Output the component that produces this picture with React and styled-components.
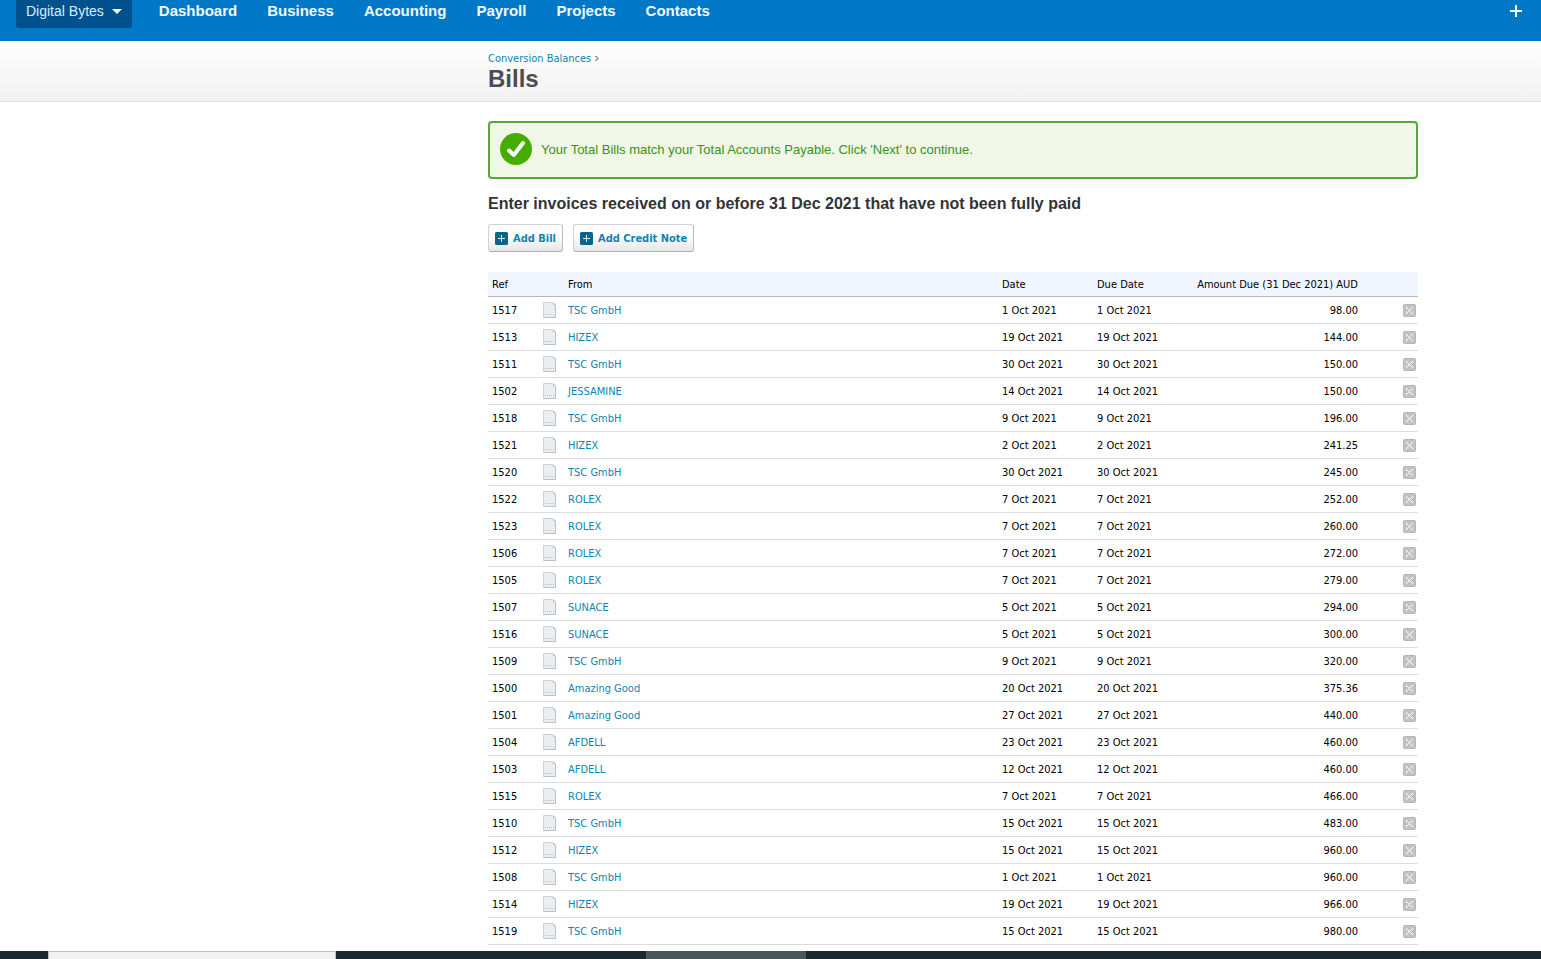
import React from 'react';
import styled, { createGlobalStyle } from 'styled-components';

const GlobalStyle = createGlobalStyle`
  * {
    box-sizing: border-box;
  }

  body {
    margin: 0;
    background-color: #fff;
    color: #000;
    font-family: "DejaVu Sans Condensed", Tahoma, "Noto Sans", sans-serif;
    font-size: 11px;
  }

  a {
    color: #0d84b2;
    text-decoration: none;
  }
`;

const Page = styled.div`
  display: flex;
  flex-direction: column;
  min-height: 100vh;
`;

const TopBar = styled.header`
  display: flex;
  align-items: flex-start;
  height: 41px;
  padding: 0 16px;
  background-color: #0078c8;
  font-family: "Liberation Sans", Arial, sans-serif;
`;

const OrgButton = styled.button`
  display: flex;
  align-items: center;
  gap: 8px;
  height: 28px;
  padding: 0 10px 6px;
  border: none;
  border-radius: 0 0 3px 3px;
  background-color: #00518e;
  color: #d9ecf8;
  font-family: inherit;
  font-size: 14px;
  cursor: pointer;
`;

const Nav = styled.nav`
  display: flex;
  gap: 30px;
  margin-left: 27px;
`;

const NavLink = styled.a`
  color: #f2faff;
  font-size: 15px;
  font-weight: bold;
  line-height: 22px;
`;

const PlusButton = styled.button`
  display: flex;
  margin: 4px 2px 0 auto;
  padding: 0;
  border: none;
  background: none;
  cursor: pointer;
`;

const TitleBar = styled.div`
  height: 61px;
  padding: 10px 123px 0 488px;
  border-bottom: 1px solid #dfdfdf;
  background: linear-gradient(#ffffff, #f1f1f1);
`;

const Breadcrumb = styled.div`
  display: flex;
  align-items: center;
  gap: 4px;
  line-height: 15px;
`;

const Title = styled.h1`
  margin: 0;
  color: #4c4c4c;
  font-family: "Liberation Sans", Arial, sans-serif;
  font-size: 24px;
  line-height: 26px;
`;

const Main = styled.main`
  flex: 1;
  padding: 19px 123px 6px 488px;
`;

const Notice = styled.div`
  display: flex;
  align-items: center;
  gap: 9px;
  height: 58px;
  padding: 0 10px 2px;
  border: 2px solid #55a832;
  border-radius: 4px;
  background-color: #f0f7e6;
  color: #3d8f1d;
  font-family: "Liberation Sans", Arial, sans-serif;
  font-size: 13px;
`;

const Heading = styled.h2`
  margin: 14px 0 10px;
  color: #333;
  font-family: "Liberation Sans", Arial, sans-serif;
  font-size: 16px;
  line-height: 21px;
`;

const ButtonRow = styled.div`
  display: flex;
  gap: 10px;
  margin-bottom: 20px;
`;

const Button = styled.button`
  display: flex;
  align-items: center;
  gap: 5px;
  height: 28px;
  padding: 0 6px;
  border: 1px solid #d2d2d2;
  border-right-color: #b9b9b9;
  border-bottom-color: #adadad;
  border-radius: 3px;
  background: linear-gradient(#ffffff 40%, #e6e6e6);
  color: #0d84b2;
  font-family: inherit;
  font-size: 11px;
  font-weight: bold;
  white-space: nowrap;
  cursor: pointer;
`;

const Table = styled.table`
  width: 100%;
  border-collapse: separate;
  border-spacing: 0;
  table-layout: fixed;
`;

const HeadCell = styled.th`
  width: ${({ $width }) => $width || 'auto'};
  height: 25px;
  padding: 0 4px;
  border-bottom: 1px solid #b4b9c4;
  background-color: #f1f5fe;
  font-weight: normal;
  text-align: ${({ $align }) => $align || 'left'};
  white-space: nowrap;
`;

const Cell = styled.td`
  height: 27px;
  padding: 0 4px;
  border-bottom: 1px solid #dcdcdc;
  text-align: ${({ $align }) => $align || 'left'};
`;

const DeleteCell = styled(Cell)`
  padding-right: 2px;
`;

const DeleteButton = styled.button`
  display: block;
  margin-left: auto;
  padding: 0;
  border: none;
  background: none;
  cursor: pointer;
`;

const Icon = styled.svg`
  display: block;
  flex-shrink: 0;
`;

const Taskbar = styled.footer`
  display: flex;
  height: 8px;
  background-color: #19292f;
`;

const TaskbarSearch = styled.div`
  width: 288px;
  margin-left: 48px;
  border: 1px solid #bdbdbd;
  border-bottom: none;
  background-color: #f1f1f1;
`;

const TaskbarItem = styled.div`
  width: 160px;
  margin-left: 310px;
  background-color: #4a5659;
`;

const AddIcon = () => (
  <Icon width="13" height="13" viewBox="0 0 13 13" aria-hidden="true">
    <rect width="13" height="13" rx="1.5" fill="#07658a" />
    <path d="M3 6.5H10M6.5 3V10" stroke="#e8f6fb" strokeWidth="1" />
  </Icon>
);

const DocumentIcon = () => (
  <Icon width="13" height="16" viewBox="0 0 13 16" aria-hidden="true">
    <path d="M.5 .5H10L12.5 3V15.5H.5Z" fill="#eaeef1" stroke="#cdd2d7" />
    <path d="M12.5 3V15.5H.5" fill="none" stroke="#b9c0c7" />
    <path d="M10 .5V3H12.5Z" fill="#b9c0c7" />
    <path d="M2 12.5H11" stroke="#b4bcc5" strokeDasharray="1 1" />
  </Icon>
);

const DeleteIcon = () => (
  <Icon width="13" height="13" viewBox="0 0 13 13" aria-hidden="true">
    <rect x=".5" y=".5" width="12" height="12" rx="1" fill="#c3c3c3" stroke="#b5b5b5" />
    <path d="M3 3L10 10M10 3L3 10" stroke="#fff" strokeWidth="1" />
  </Icon>
);

const CheckIcon = () => (
  <Icon width="32" height="32" viewBox="0 0 32 32" aria-hidden="true">
    <circle cx="16" cy="16" r="16" fill="#46ad00" />
    <path d="M9 17.5L13.8 22L23 10" fill="none" stroke="#fff" strokeWidth="4" strokeLinecap="round" strokeLinejoin="round" />
  </Icon>
);

const navItems = ['Dashboard', 'Business', 'Accounting', 'Payroll', 'Projects', 'Contacts'];

const bills = [
  { ref: '1517', from: 'TSC GmbH', date: '1 Oct 2021', amount: '98.00' },
  { ref: '1513', from: 'HIZEX', date: '19 Oct 2021', amount: '144.00' },
  { ref: '1511', from: 'TSC GmbH', date: '30 Oct 2021', amount: '150.00' },
  { ref: '1502', from: 'JESSAMINE', date: '14 Oct 2021', amount: '150.00' },
  { ref: '1518', from: 'TSC GmbH', date: '9 Oct 2021', amount: '196.00' },
  { ref: '1521', from: 'HIZEX', date: '2 Oct 2021', amount: '241.25' },
  { ref: '1520', from: 'TSC GmbH', date: '30 Oct 2021', amount: '245.00' },
  { ref: '1522', from: 'ROLEX', date: '7 Oct 2021', amount: '252.00' },
  { ref: '1523', from: 'ROLEX', date: '7 Oct 2021', amount: '260.00' },
  { ref: '1506', from: 'ROLEX', date: '7 Oct 2021', amount: '272.00' },
  { ref: '1505', from: 'ROLEX', date: '7 Oct 2021', amount: '279.00' },
  { ref: '1507', from: 'SUNACE', date: '5 Oct 2021', amount: '294.00' },
  { ref: '1516', from: 'SUNACE', date: '5 Oct 2021', amount: '300.00' },
  { ref: '1509', from: 'TSC GmbH', date: '9 Oct 2021', amount: '320.00' },
  { ref: '1500', from: 'Amazing Good', date: '20 Oct 2021', amount: '375.36' },
  { ref: '1501', from: 'Amazing Good', date: '27 Oct 2021', amount: '440.00' },
  { ref: '1504', from: 'AFDELL', date: '23 Oct 2021', amount: '460.00' },
  { ref: '1503', from: 'AFDELL', date: '12 Oct 2021', amount: '460.00' },
  { ref: '1515', from: 'ROLEX', date: '7 Oct 2021', amount: '466.00' },
  { ref: '1510', from: 'TSC GmbH', date: '15 Oct 2021', amount: '483.00' },
  { ref: '1512', from: 'HIZEX', date: '15 Oct 2021', amount: '960.00' },
  { ref: '1508', from: 'TSC GmbH', date: '1 Oct 2021', amount: '960.00' },
  { ref: '1514', from: 'HIZEX', date: '19 Oct 2021', amount: '966.00' },
  { ref: '1519', from: 'TSC GmbH', date: '15 Oct 2021', amount: '980.00' },
];

const App = () => {
  const [rows, setRows] = React.useState(bills);

  const removeBill = (ref) => {
    setRows(rows.filter((bill) => bill.ref !== ref));
  };

  return (
    <Page>
      <GlobalStyle />
      <TopBar>
        <OrgButton type="button">
          Digital Bytes
          <Icon width="10" height="5" viewBox="0 0 10 5" aria-hidden="true">
            <path d="M0 0H10L5 5Z" fill="#fff" />
          </Icon>
        </OrgButton>
        <Nav>
          {navItems.map((item) => (
            <NavLink key={item} href="#">{item}</NavLink>
          ))}
        </Nav>
        <PlusButton type="button" aria-label="Create new">
          <Icon width="14" height="14" viewBox="0 0 14 14" aria-hidden="true">
            <path d="M1 7H13M7 1V13" stroke="#fff" strokeWidth="2" />
          </Icon>
        </PlusButton>
      </TopBar>

      <TitleBar>
        <Breadcrumb>
          <a href="#">Conversion Balances</a>
          <Icon width="4" height="7" viewBox="0 0 4 7" aria-hidden="true">
            <path d="M.5 1L3 3.5L.5 6" fill="none" stroke="#333" />
          </Icon>
        </Breadcrumb>
        <Title>Bills</Title>
      </TitleBar>

      <Main>
        <Notice role="status">
          <CheckIcon />
          Your Total Bills match your Total Accounts Payable. Click 'Next' to continue.
        </Notice>

        <Heading>Enter invoices received on or before 31 Dec 2021 that have not been fully paid</Heading>

        <ButtonRow>
          <Button type="button"><AddIcon />Add Bill</Button>
          <Button type="button"><AddIcon />Add Credit Note</Button>
        </ButtonRow>

        <Table>
          <thead>
            <tr>
              <HeadCell $width="51px">Ref</HeadCell>
              <HeadCell $width="25px" />
              <HeadCell>From</HeadCell>
              <HeadCell $width="95px">Date</HeadCell>
              <HeadCell $width="95px">Due Date</HeadCell>
              <HeadCell $width="174px" $align="right">Amount Due (31 Dec 2021) AUD</HeadCell>
              <HeadCell $width="56px" />
            </tr>
          </thead>
          <tbody>
            {rows.map((bill) => (
              <tr key={bill.ref}>
                <Cell>{bill.ref}</Cell>
                <Cell><DocumentIcon /></Cell>
                <Cell><a href="#">{bill.from}</a></Cell>
                <Cell>{bill.date}</Cell>
                <Cell>{bill.date}</Cell>
                <Cell $align="right">{bill.amount}</Cell>
                <DeleteCell>
                  <DeleteButton type="button" aria-label={`Delete ${bill.ref}`} onClick={() => removeBill(bill.ref)}>
                    <DeleteIcon />
                  </DeleteButton>
                </DeleteCell>
              </tr>
            ))}
          </tbody>
        </Table>
      </Main>

      <Taskbar>
        <TaskbarSearch />
        <TaskbarItem />
      </Taskbar>
    </Page>
  );
};

export default App;
